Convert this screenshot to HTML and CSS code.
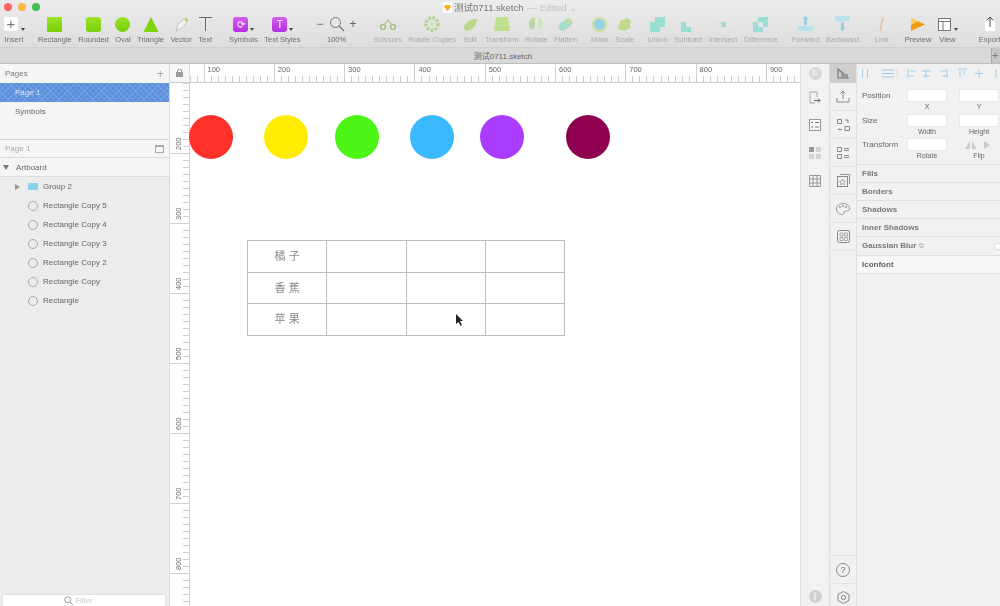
FILE: index.html
```html
<!DOCTYPE html>
<html lang="zh-CN">
<head>
  <meta charset="UTF-8">
  <title>测试0711.sketch</title>
  <link rel="stylesheet" href="styles.css">
</head>
<body>

<header class="window-top">
  <div class="titlebar">
    <span class="light light-red"></span><span class="light light-yellow"></span><span class="light light-green"></span>
    <span class="doc-icon"><svg width="9" height="11" viewBox="0 0 9 11"><rect width="9" height="11" fill="#fff"/><path d="M2 3h5l1 2-3.500 4L1 5z" fill="#f5b120"/></svg></span>
    <span class="doc-name">测试0711.sketch</span>
    <span class="doc-state">— Edited ⌄</span>
  </div>

  <div class="toolbar">
    <div class="tool-group g-insert">
      <div class="tool"><div class="icon"><span class="white-box">+</span><i class="caret"></i></div><span>Insert</span></div>
    </div>

    <div class="tool-group g-shapes">
      <div class="tool"><div class="icon"><span class="shape"></span></div><span>Rectangle</span></div>
      <div class="tool"><div class="icon"><span class="shape rounded"></span></div><span>Rounded</span></div>
      <div class="tool"><div class="icon"><span class="shape oval"></span></div><span>Oval</span></div>
      <div class="tool"><div class="icon"><svg width="16" height="15" viewBox="0 0 16 15"><path d="M8 0l7.500 15H.5z" fill="#7fd40e"/></svg></div><span>Triangle</span></div>
      <div class="tool"><div class="icon"><svg width="16" height="15" viewBox="0 0 16 15"><path d="M3 14l2-7 6-5 3 3-5 6z" fill="#f1f1f1" stroke="#c4c4c4"/><path d="M11 2l2-2 3 3-2 2z" fill="#b5dc74"/></svg></div><span>Vector</span></div>
      <div class="tool"><div class="icon"><svg width="13" height="14" viewBox="0 0 13 14"><path d="M0 .5h13M6.500 .5V14" stroke="#666" stroke-width="1" fill="none"/></svg></div><span>Text</span></div>
    </div>

    <div class="tool-group g-styles">
      <div class="tool"><div class="icon"><span class="purple">⟳</span><i class="caret"></i></div><span>Symbols</span></div>
      <div class="tool"><div class="icon"><span class="purple">T</span><i class="caret"></i></div><span>Text Styles</span></div>
    </div>

    <div class="tool-group g-zoom">
      <div class="tool"><div class="icon zoom-icon">
        <b>−</b>
        <svg width="16" height="16" viewBox="0 0 16 16"><circle cx="6.500" cy="6.500" r="5" fill="none" stroke="#777" stroke-width="1"/><path d="M10 10l5 5" stroke="#777" stroke-width="1.300"/></svg>
        <b>+</b>
      </div><span>100%</span></div>
    </div>

    <div class="tool-group g-path faded">
      <div class="tool"><div class="icon"><svg width="18" height="12" viewBox="0 0 18 12"><circle cx="4" cy="9" r="2.500" fill="none" stroke="#8cb35c" stroke-width="1.500"/><circle cx="14" cy="9" r="2.500" fill="none" stroke="#8cb35c" stroke-width="1.500"/><path d="M5 7l4-5 4 5" stroke="#a5c97a" stroke-width="1.500" fill="none"/></svg></div><span>Scissors</span></div>
      <div class="tool"><div class="icon"><svg width="16" height="16" viewBox="0 0 16 16"><circle cx="8" cy="8" r="6" fill="none" stroke="#a3c96c" stroke-width="3.500" stroke-dasharray="2.500 1.500"/><circle cx="8" cy="8" r="2" fill="#c0dc8f"/></svg></div><span>Rotate Copies</span></div>
      <div class="tool"><div class="icon"><svg width="16" height="15" viewBox="0 0 16 15"><path d="M2 12C1 7 8 1 15 2c0 6-5 12-11 12z" fill="#abd46a"/></svg></div><span>Edit</span></div>
      <div class="tool"><div class="icon"><svg width="16" height="14" viewBox="0 0 16 14"><path d="M2 0h12l2 14H0z" fill="#b4dd6b"/></svg></div><span>Transform</span></div>
      <div class="tool"><div class="icon"><svg width="18" height="16" viewBox="0 0 18 16"><path d="M8 1C3 2 1 6 2 10l2 4 4-2V1z" fill="#a9d38a"/><path d="M11 1c4 1 6 5 5 9-1 2-2 4-4 4l-1-3z" fill="#cde0b7"/></svg></div><span>Rotate</span></div>
      <div class="tool"><div class="icon"><svg width="16" height="15" viewBox="0 0 16 15"><rect x="1" y="4" width="15" height="8" rx="4" transform="rotate(-35 8 8)" fill="#8cd9c4"/><path d="M9 3l4-2 2 3-5 4z" fill="#b9d97f"/></svg></div><span>Flatten</span></div>
    </div>

    <div class="tool-group g-mask faded">
      <div class="tool"><div class="icon"><svg width="15" height="15" viewBox="0 0 15 15"><circle cx="7.500" cy="7.500" r="7.500" fill="#c7df83"/><circle cx="7.500" cy="7.500" r="5.500" fill="#7ccbe6"/></svg></div><span>Mask</span></div>
      <div class="tool"><div class="icon"><svg width="15" height="15" viewBox="0 0 15 15"><path d="M1 12L3 4l7-3 4 3-1 7-6 3z" fill="#b3d66a"/></svg></div><span>Scale</span></div>
    </div>

    <div class="tool-group g-bool faded">
      <div class="tool"><div class="icon"><svg width="15" height="15" viewBox="0 0 15 15"><path d="M5 0h10v10h-5v5H0V5h5z" fill="#7fdccd"/></svg></div><span>Union</span></div>
      <div class="tool"><div class="icon"><svg width="15" height="15" viewBox="0 0 15 15"><path d="M0 5h5v5h5v5H0z" fill="#7fdccd"/><rect x="5" width="10" height="10" fill="#e8e8e8"/></svg></div><span>Subtract</span></div>
      <div class="tool"><div class="icon"><svg width="15" height="15" viewBox="0 0 15 15"><rect x="5" width="10" height="10" fill="#e8e8e8"/><rect y="5" width="10" height="10" fill="#e4e4e4"/><rect x="5" y="5" width="5" height="5" fill="#7fdccd"/></svg></div><span>Intersect</span></div>
      <div class="tool"><div class="icon"><svg width="15" height="15" viewBox="0 0 15 15"><path d="M5 0h10v10h-5V5H5zM0 5h5v5h5v5H0z" fill="#7fdccd"/></svg></div><span>Difference</span></div>
    </div>

    <div class="tool-group g-order faded">
      <div class="tool"><div class="icon"><svg width="15" height="16" viewBox="0 0 15 16"><path d="M7.500 0l3 3H9v6H6V3H4.500z" fill="#7cc7e0"/><rect y="10" width="15" height="5" rx="1" fill="#a5dff0"/></svg></div><span>Forward</span></div>
      <div class="tool"><div class="icon"><svg width="15" height="16" viewBox="0 0 15 16"><rect width="15" height="5" rx="1" fill="#a5dff0"/><path d="M7.500 15l-3-3H6V6h3v6h1.500z" fill="#7cc7e0"/></svg></div><span>Backward</span></div>
    </div>

    <div class="tool-group g-link faded">
      <div class="tool"><div class="icon"><svg width="8" height="15" viewBox="0 0 8 15"><path d="M6 1C3 3 4 8 2 14" stroke="#e2b48c" stroke-width="1.600" fill="none"/></svg></div><span>Link</span></div>
    </div>

    <div class="tool-group g-view">
      <div class="tool"><div class="icon"><svg width="14" height="15" viewBox="0 0 14 15"><path d="M0 1l14 6.500L0 14z" fill="#f39c12"/><path d="M0 1l7 3.300L0 8z" fill="#fbd25e"/></svg></div><span>Preview</span></div>
      <div class="tool"><div class="icon view-icon"><svg width="13" height="13" viewBox="0 0 13 13"><rect x=".5" y=".5" width="12" height="12" fill="#fff" stroke="#777"/><path d="M.5 3.500h12M5 3.500v9" stroke="#777"/></svg><i class="caret"></i></div><span>View</span></div>
    </div>

    <div class="tool-group g-export">
      <div class="tool"><div class="icon"><svg width="12" height="16" viewBox="0 0 12 16"><rect x="1" y="5" width="10" height="10" fill="#fff"/><path d="M6 11V1M3 4l3-3 3 3" stroke="#555" fill="none"/></svg></div><span>Export</span></div>
    </div>
  </div>

  <div class="tabbar">
    <span>测试0711.sketch</span>
    <b class="tab-add">+</b>
  </div>
</header>

<main class="workspace">
  <aside class="layers">
    <div class="pages-head"><span>Pages</span><b>+</b></div>
    <div class="page-row selected">Page 1</div>
    <div class="page-row symbols">Symbols</div>

    <div class="page-title"><span>Page 1</span><i class="page-toggle"></i></div>
    <div class="artboard-row"><i class="arrow-down"></i>Artboard</div>

    <ul class="layer-list">
      <li><i class="arrow-right"></i><i class="folder"></i>Group 2</li>
      <li><i class="ring"></i>Rectangle Copy 5</li>
      <li><i class="ring"></i>Rectangle Copy 4</li>
      <li><i class="ring"></i>Rectangle Copy 3</li>
      <li><i class="ring"></i>Rectangle Copy 2</li>
      <li><i class="ring"></i>Rectangle Copy</li>
      <li><i class="ring"></i>Rectangle</li>
    </ul>

    <div class="filter">
      <svg width="9" height="9" viewBox="0 0 9 9"><circle cx="3.700" cy="3.700" r="3" fill="none" stroke="#999"/><path d="M6 6l3 3" stroke="#999"/></svg>
      <span>Filter</span>
    </div>
  </aside>

  <section class="stage">
    <div class="corner">
      <svg width="7" height="8" viewBox="0 0 7 8"><rect y="3" width="7" height="5" fill="#999"/><path d="M1.500 3V2a2 2 0 0 1 4 0v1" fill="none" stroke="#999"/></svg>
    </div>
    <div class="ruler-h">
      <span>100</span><span>200</span><span>300</span><span>400</span><span>500</span><span>600</span><span>700</span><span>800</span><span>900</span>
    </div>
    <div class="ruler-v">
      <span>200</span><span>300</span><span>400</span><span>500</span><span>600</span><span>700</span><span>800</span>
    </div>
    <div class="canvas">
      <div class="dot dot-red"></div>
      <div class="dot dot-yellow"></div>
      <div class="dot dot-green"></div>
      <div class="dot dot-blue"></div>
      <div class="dot dot-purple"></div>
      <div class="dot dot-maroon"></div>

      <table class="fruit-table">
        <tr><td>橘 子</td><td></td><td></td><td></td></tr>
        <tr><td>香 蕉</td><td></td><td></td><td></td></tr>
        <tr><td>苹 果</td><td></td><td></td><td></td></tr>
      </table>

      <svg class="pointer" width="8" height="12" viewBox="0 0 8 12"><path d="M0 0l7 7H4l2 4-1.500.8L2.500 8 0 10z" fill="#222"/></svg>
    </div>
  </section>

  <div class="plugin-col">
    <span class="plug-top"><i class="plug-f">F</i></span>
    <span class="plug-btn"><svg width="12" height="13" viewBox="0 0 12 13"><path d="M8 6V1H1v11h5" fill="none" stroke="#aaa"/><path d="M5 9.500h6M9 7.500l2 2-2 2" fill="none" stroke="#666"/></svg></span>
    <span class="plug-btn"><svg width="12" height="12" viewBox="0 0 12 12"><rect x=".5" y=".5" width="11" height="11" fill="#f8f8f8" stroke="#999"/><path d="M2 3.500h2M2 8h2M6 3.500h4M6 8h4" stroke="#777"/></svg></span>
    <span class="plug-btn"><svg width="12" height="12" viewBox="0 0 12 12"><rect width="5" height="5" fill="#999"/><rect x="7" width="5" height="5" fill="#d5d5d5"/><rect y="7" width="5" height="5" fill="#d5d5d5"/><rect x="7" y="7" width="5" height="5" fill="#d5d5d5"/></svg></span>
    <span class="plug-btn"><svg width="12" height="12" viewBox="0 0 12 12"><path d="M.5.500h11v11H.5zM.5 4h11M.5 8h11M4 .5v11M8 .5v11" fill="none" stroke="#999"/></svg></span>
    <span class="plug-info">i</span>
  </div>

  <div class="icon-col">
    <span class="icon-cell active"><svg width="12" height="11" viewBox="0 0 12 11"><path d="M1 1v9h10L1 1z" fill="none" stroke="#777" stroke-width="1.200"/><rect x="4" y="6" width="7" height="4" fill="#999"/></svg></span>
    <span class="icon-cell"><svg width="14" height="13" viewBox="0 0 14 13"><path d="M7 9V1M4.500 3.500L7 1l2.500 2.500M1 8v4h12V8" fill="none" stroke="#888"/></svg></span>
    <span class="icon-cell"><svg width="13" height="12" viewBox="0 0 13 12"><path d="M.5.500h4v4h-4zM8 7.500h4.500v4H8zM8 1h3l-1 1M11 1v3M5 10.500H1L2 9.500" fill="none" stroke="#888"/></svg></span>
    <span class="icon-cell"><svg width="12" height="12" viewBox="0 0 12 12"><path d="M.5.500h4v4h-4zM.5 7.500h4v4h-4zM7 1.500h5M7 3.500h5M7 8.500h5M7 10.500h5" fill="none" stroke="#888"/></svg></span>
    <span class="icon-cell"><svg width="13" height="13" viewBox="0 0 13 13"><path d="M3 .5h9.500V10" fill="none" stroke="#999"/><rect x=".5" y="2.500" width="10" height="10" fill="none" stroke="#888"/><path d="M5.500 5l1 2 2 .3-1.500 1.400.4 2-1.900-1-1.900 1 .4-2L2.500 7.300l2-.3z" fill="none" stroke="#888" stroke-width=".7"/></svg></span>
    <span class="icon-cell"><svg width="14" height="12" viewBox="0 0 14 12"><path d="M7 .5C3 .5.500 3 .5 6c0 3 2.500 5.500 6 5.500 2 0 1-2 2-3s4.500.5 5-2.500C14 3 11 .5 7 .5z" fill="none" stroke="#999"/><circle cx="4" cy="4" r="1" fill="#999"/><circle cx="7" cy="3" r="1" fill="#999"/><circle cx="10" cy="4" r="1" fill="#999"/></svg></span>
    <span class="icon-cell"><svg width="13" height="13" viewBox="0 0 13 13"><rect x=".5" y=".5" width="12" height="12" rx="2" fill="none" stroke="#888"/><path d="M3 3h3v3H3zM7.500 3h3v3h-3zM3 7.500h3v3H3zM7.500 7.500h3v3h-3z" fill="none" stroke="#999" stroke-width=".8"/></svg></span>
    <span class="icon-foot">
      <span class="icon-cell top-line"><svg width="14" height="14" viewBox="0 0 14 14"><circle cx="7" cy="7" r="6.500" fill="none" stroke="#888"/><text x="7" y="10" text-anchor="middle" class="help-mark">?</text></svg></span>
      <span class="icon-cell top-line"><svg width="13" height="13" viewBox="0 0 13 13"><circle cx="6.500" cy="6.500" r="2.200" fill="none" stroke="#888"/><path d="M6.500 .5L12 3.500v6l-5.500 3L1 9.500v-6z" fill="none" stroke="#888"/></svg></span>
    </span>
  </div>

  <aside class="inspector">
    <div class="align-row">
      <svg width="143" height="11" viewBox="0 0 143 11">
        <g fill="none" stroke="#a3cde9">
          <path d="M5.500 1v9M10.500 1v9M25 5.500h12M25 2h12M25 9h12" />
          <path d="M51 1v9M53 3h6M53 8h4M69 1v9M65 3h9M66 8h7M90 1v9M83 3h6M85 8h4M101 1h9M103 3v6M107 3v4M122 1v9M118 5.500h8M139 1v9"/>
        </g>
        <path d="M40 1v9" stroke="#ddd"/>
      </svg>
    </div>
    <div class="field-row">
      <span class="field-name">Position</span>
      <div class="field"><i class="box"></i><small>X</small></div>
      <div class="field"><i class="box"></i><small>Y</small></div>
    </div>
    <div class="field-row">
      <span class="field-name">Size</span>
      <div class="field"><i class="box"></i><small>Width</small></div>
      <div class="field"><i class="box"></i><small>Height</small></div>
    </div>
    <div class="field-row">
      <span class="field-name">Transform</span>
      <div class="field"><i class="box"></i><small>Rotate</small></div>
      <div class="field"><i class="box flip"><svg width="30" height="9" viewBox="0 0 30 9"><path d="M6 1v8H1zM8 1v8h5zM20 1v8l6-4z" fill="#ccc"/></svg></i><small>Flip</small></div>
    </div>
    <div class="section first">Fills</div>
    <div class="section">Borders</div>
    <div class="section">Shadows</div>
    <div class="section">Inner Shadows</div>
    <div class="section blur">Gaussian Blur <em>≎</em><i class="switch"></i></div>
    <div class="section plugin">Iconfont</div>
  </aside>
</main>

</body>
</html>
```

FILE: styles.css
```css
* { box-sizing: border-box; }
html, body { height: 100%; }
body { margin: 0; width: 1000px; height: 606px; overflow: hidden; font-family: "Liberation Sans", "Noto Sans CJK SC", sans-serif; background: #fff; color: #666; display: flex; flex-direction: column; filter: blur(0.35px); }
i { font-style: normal; display: block; }
ul { list-style: none; margin: 0; padding: 0; }

/* window top */
.window-top { height: 64px; flex: none; background: linear-gradient(#ececec, #dddddd 47px, #d8d8d8); border-bottom: 1px solid #bdbdbd; }
.titlebar { height: 14px; display: flex; align-items: center; font-size: 9.500px; padding-left: 4px; }
.light { width: 8px; height: 8px; border-radius: 50%; margin-right: 6px; }
.light-red { background: #f9675f; }
.light-yellow { background: #f8b94c; }
.light-green { background: #3fbe50; }
.doc-icon { margin-left: 397px; width: 12px; display: flex; }
.doc-name { color: #777; margin-left: -1px; }
.doc-state { color: #c4c4c4; margin-left: 4px; }

.toolbar { height: 33px; padding-top: 1px; display: flex; align-items: flex-start; font-size: 7.500px; white-space: nowrap; }
.tool-group { display: flex; gap: 6.500px; flex: none; }
.tool { display: flex; flex-direction: column; align-items: center; flex: none; }
.tool > span { margin-top: 2px; line-height: 9px; color: #6e6e6e; }
.icon { height: 18px; display: flex; align-items: center; justify-content: center; position: relative; }
.faded .tool > span { color: #aaa; }
.faded .icon { opacity: .72; }

.g-insert { margin-left: 4px; }
.g-shapes { margin-left: 14px; }
.g-styles { margin-left: 17px; }
.g-zoom { margin-left: 16px; }
.g-path { margin-left: 17px; }
.g-mask { margin-left: 14px; }
.g-bool { margin-left: 14px; }
.g-order { margin-left: 14px; }
.g-link { margin-left: 16px; }
.g-view { margin-left: 16px; }
.g-export { margin-left: 22px; }

.white-box { width: 14px; height: 14px; background: #fff; border-radius: 2px; font-size: 15px; line-height: 13px; text-align: center; color: #777; margin-right: 6px; }
.caret { position: absolute; right: -1px; bottom: 2px; border: 2px solid transparent; border-top: 3px solid #444; border-bottom: 0; }
.shape { width: 15px; height: 15px; background: linear-gradient(#9be22a, #78cf08); }
.shape.rounded { border-radius: 3px; }
.shape.oval { border-radius: 50%; }
.purple { width: 15px; height: 15px; border-radius: 3px; background: linear-gradient(#d45cf0, #b52fe0); color: #fff; font-size: 10px; line-height: 15px; text-align: center; margin-right: 5px; }
.zoom-icon { gap: 5px; }
.zoom-icon b { font-weight: normal; font-size: 12px; color: #666; }
.view-icon { padding-right: 6px; }

.tabbar { height: 16px; display: flex; align-items: center; justify-content: center; font-size: 8px; color: #666; position: relative; border-top: 1px solid #d0d0d0; background: #d9d9d9; padding-left: 6px; }
.tab-add { position: absolute; right: 0; top: 0; width: 9px; height: 15px; background: #c6c6c6; border-left: 1px solid #aaa; font-weight: normal; font-size: 11px; line-height: 14px; color: #777; }

/* main */
.workspace { flex: 1; min-height: 0; display: grid; grid-template-columns: 170px 630px 29px 28px 143px; }

.layers { background: #ececec; border-right: 1px solid #dcdcdc; display: flex; flex-direction: column; font-size: 8px; color: #666; }
.pages-head { height: 19px; flex: none; background: #f5f5f5; display: flex; justify-content: space-between; align-items: center; padding: 0 5px; color: #777; }
.pages-head b { font-weight: normal; font-size: 13px; color: #aaa; }
.page-row { height: 19px; flex: none; line-height: 19px; padding-left: 15px; background: #f5f5f5; }
.page-row.symbols { height: 37px; }
.page-row.selected { color: #dbe7fa; background: repeating-linear-gradient(45deg, transparent 0 3px, rgba(255,255,255,.13) 3px 4px), repeating-linear-gradient(-45deg, transparent 0 3px, rgba(255,255,255,.13) 3px 4px), #5a8fdc; }
.page-title { height: 19px; flex: none; background: #f5f5f5; border-top: 1px solid #d8d8d8; border-bottom: 1px solid #dcdcdc; display: flex; justify-content: space-between; align-items: center; padding: 0 5px; color: #aaa; }
.page-toggle { width: 9px; height: 8px; border: 1px solid #aaa; border-top-width: 2px; }
.artboard-row { height: 19px; flex: none; background: #f5f5f5; border-bottom: 1px solid #dcdcdc; display: flex; align-items: center; gap: 7px; padding-left: 3px; }
.arrow-down { border: 3px solid transparent; border-top: 5px solid #777; border-bottom: 0; border-left-width: 3px; }
.layer-list li { height: 19px; display: flex; align-items: center; padding-left: 28px; position: relative; }
.ring { width: 10px; height: 10px; border: 1px solid #aaa; border-radius: 50%; margin-right: 5px; }
.folder { width: 10px; height: 7px; background: #8cd2ee; margin-right: 5px; }
.arrow-right { position: absolute; left: 15px; border: 3px solid transparent; border-left: 5px solid #999; border-right: 0; }
.filter { margin-top: auto; height: 12px; margin-left: 2px; width: 164px; padding-right: 12px; background: #fff; border: 1px solid #e2e2e2; border-bottom: 0; border-radius: 2px 2px 0 0; display: flex; align-items: center; justify-content: center; gap: 3px; color: #c8c8c8; font-size: 7.500px; }

/* rulers and canvas */
.stage { display: grid; grid-template-columns: 20px 610px; grid-template-rows: 19px 1fr; min-height: 0; overflow: hidden; }
.corner { background: #f7f7f7; border-bottom: 1px solid #ccc; border-right: 1px solid #ddd; display: flex; align-items: center; justify-content: center; }
.ruler-h { display: flex; padding-left: 13.500px; overflow: hidden; font-size: 7.500px; color: #666; border-bottom: 1px solid #ccc; background: repeating-linear-gradient(90deg, #d0d0d0 0 1px, transparent 1px 7.030px) -0.500px 100% / 100% 6px no-repeat, #fff; }
.ruler-h span { flex: none; width: 70.300px; border-left: 1px solid #d0d0d0; padding: 1px 0 0 3px; line-height: 9px; }
.ruler-v { overflow: hidden; font-size: 7.500px; color: #666; border-right: 1px solid #d0d0d0; background: repeating-linear-gradient(180deg, #d0d0d0 0 1px, transparent 1px 7px) 100% 0 / 6px 100% no-repeat, #fff; display: flex; flex-direction: column; }
.ruler-v span { flex: none; height: 70px; width: 100%; writing-mode: vertical-rl; rotate: 180deg; border-top: 1px solid #d0d0d0; padding: 3px 4px 0 0; display: flex; align-items: flex-start; line-height: 9px; }
.ruler-v span:first-child { margin-top: 1px; }

.canvas { position: relative; background: #fff; }
.dot { position: absolute; top: 32px; width: 44px; height: 44px; border-radius: 50%; }
.dot-red { left: -1px; background: #ff3128; }
.dot-yellow { left: 74px; background: #ffec00; }
.dot-green { left: 145px; background: #4cf516; }
.dot-blue { left: 220px; background: #3ab9ff; }
.dot-purple { left: 290px; background: #aa3cff; }
.dot-maroon { left: 376px; background: #8e0050; }

.fruit-table { position: absolute; left: 57px; top: 157px; width: 318px; height: 95px; border-collapse: collapse; table-layout: fixed; }
.fruit-table td { border: 1px solid #bcbfc3; text-align: center; font-size: 11px; color: #888; padding: 0 0 2px; height: 31.600px; }
.pointer { position: absolute; left: 266px; top: 231px; }

/* side columns */
.plugin-col { background: #f2f2f2; border-left: 1px solid #dedede; display: flex; flex-direction: column; position: relative; }
.plug-top { height: 19px; display: flex; align-items: center; justify-content: center; }
.plug-f { width: 13px; height: 13px; border-radius: 50%; background: #d8d8d8; color: #f2f2f2; font-size: 9px; line-height: 13px; text-align: center; font-weight: bold; }
.plug-btn { height: 28px; display: flex; align-items: center; justify-content: center; }
.plug-info { margin-top: auto; margin-bottom: 3px; align-self: center; width: 13px; height: 13px; border-radius: 50%; background: #d0d0d0; color: #f2f2f2; font-size: 10px; line-height: 13px; text-align: center; font-weight: bold; }

.icon-col { background: #f1f1f1; border-left: 1px solid #dedede; border-right: 1px solid #e0e0e0; display: flex; flex-direction: column; }
.icon-cell { height: 28px; flex: none; display: flex; align-items: center; justify-content: center; border-bottom: 1px solid #e4e4e4; }
.icon-cell.active { height: 19px; background: #cecece; border-bottom: 0; }
.icon-foot { margin-top: auto; height: 51px; flex: none; display: flex; flex-direction: column; }
.icon-foot .icon-cell { border-bottom: 0; }
.top-line { border-top: 1px solid #e4e4e4; }
.help-mark { font-size: 9px; fill: #777; }

.inspector { background: #f1f1f1; font-size: 8px; color: #666; overflow: hidden; }
.align-row { height: 19px; display: flex; align-items: center; }
.field-row { height: 24.500px; display: flex; padding: 6px 0 0 5px; gap: 12px; }
.field-row .field-name { width: 33px; line-height: 9px; margin-top: 2px; flex: none; }
.field { width: 40px; flex: none; display: flex; flex-direction: column; align-items: center; }
.field small { flex: none; font-size: 7px; line-height: 9px; }
.box { flex: none; width: 40px; height: 13px; background: #fff; border: 1px solid #e8e8e8; }
.box.flip { background: none; border: 0; display: flex; align-items: center; padding-left: 5px; }
.section { height: 18.300px; line-height: 18px; padding-left: 5px; font-weight: bold; font-size: 8px; color: #777; border-bottom: 1px solid #e0e0e0; position: relative; }
.section.first { border-top: 1px solid #e0e0e0; margin-top: 7px; height: 19px; }
.section em { font-style: normal; font-weight: normal; color: #999; }
.switch { position: absolute; right: -8px; top: 6px; width: 14px; height: 7px; background: #fff; border-radius: 4px; border: 1px solid #ddd; }
.section.plugin { background: #f7f7f7; color: #666; }
```
